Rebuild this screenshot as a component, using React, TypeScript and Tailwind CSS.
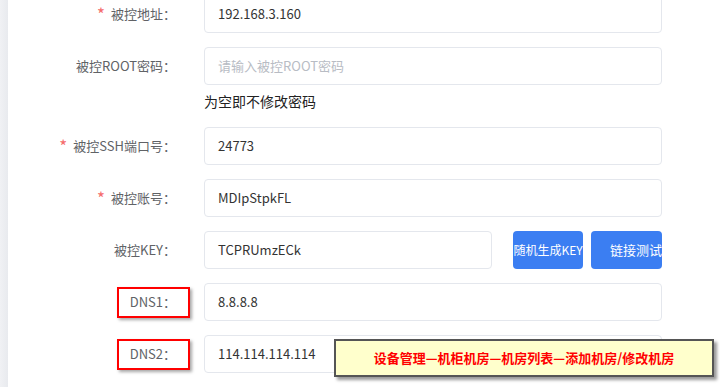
import React from "react";

const font = { fontFamily: '"Noto Sans CJK SC", "Noto Sans", sans-serif' };

function Label({ text, required }: { text: string; required?: boolean }) {
  return (
    <div className="w-[196px] shrink-0 flex justify-end items-center pr-[28px] text-[13px] text-[#606266] h-[38px]">
      {required && <span className="text-[#f56c6c] mr-[6px] text-[17px] leading-none mt-[-2px]">*</span>}
      <span>{text}</span>
    </div>
  );
}

function Input({ value, placeholder, w = "w-[458px]" }: { value?: string; placeholder?: string; w?: string }) {
  return (
    <div
      className={`${w} h-[38px] shrink-0 border border-[#e4e7ed] rounded-[4px] bg-white px-[13px] flex items-center text-[13px] ${
        value ? "text-[#333333]" : "text-[#b8bcc4]"
      }`}
    >
      {value ?? placeholder}
    </div>
  );
}

function Row({ label, required, value, placeholder, box }: { label: string; required?: boolean; value?: string; placeholder?: string; box?: boolean }) {
  return (
    <div className="relative flex items-center h-[38px]">
      <Label text={label} required={required} />
      <Input value={value} placeholder={placeholder} />
      {box && (
        <div className="absolute left-[109px] top-[4px] w-[73px] h-[31px] border-[2px] border-[#ff0000] shadow-[2px_2px_3px_rgba(0,0,0,0.35)]" />
      )}
    </div>
  );
}

export default function App() {
  return (
    <div className="relative w-[720px] h-[387px] overflow-hidden bg-white flex" style={font}>
      <div className="w-[8px] shrink-0 bg-gradient-to-r from-[#f0f1f4] to-[#e8eaee]" />
      <div className="flex-1 flex flex-col gap-[14px] mt-[-5px]">
        <Row label="被控地址：" required value="192.168.3.160" />
        <div className="flex flex-col">
          <Row label="被控ROOT密码：" placeholder="请输入被控ROOT密码" />
          <div className="pl-[196px] mt-[4px] h-[24px] leading-[24px] text-[14px] text-[#222222]">为空即不修改密码</div>
        </div>
        <Row label="被控SSH端口号：" required value="24773" />
        <Row label="被控账号：" required value="MDIpStpkFL" />
        <div className="flex items-center h-[38px]">
          <Label text="被控KEY：" />
          <Input value="TCPRUmzECk" w="w-[288px]" />
          <div className="ml-[21px] w-[70px] h-[38px] rounded-[4px] bg-[#3b7ef2] text-white text-[12px] flex items-center justify-center whitespace-nowrap">
            随机生成KEY
          </div>
          <div className="ml-[8px] w-[71px] h-[38px] rounded-[4px] bg-[#3b7ef2] text-white text-[13px] flex items-center justify-end whitespace-nowrap">
            链接测试
          </div>
        </div>
        <Row label="DNS1：" value="8.8.8.8" box />
        <Row label="DNS2：" value="114.114.114.114" box />
      </div>
      <div className="absolute left-[334px] top-[339px] w-[380px] h-[38px] border-[2px] border-[#555555] bg-[#ffffcc] shadow-[3px_3px_3px_rgba(0,0,0,0.4)] flex items-center justify-center text-[13px] font-bold text-[#ff0000]">
        设备管理—机柜机房—机房列表—添加机房/修改机房
      </div>
    </div>
  );
}
